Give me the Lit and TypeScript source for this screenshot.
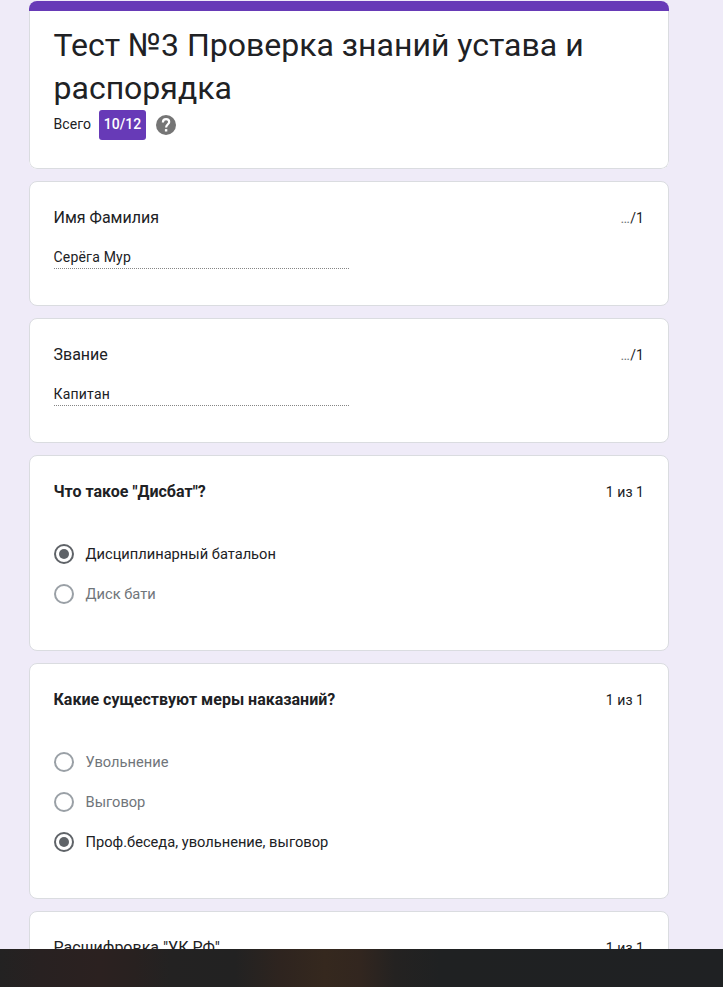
import { LitElement, html, css, nothing } from "lit";
import { customElement, property } from "lit/decorators.js";
import { classMap } from "lit/directives/class-map.js";

interface Question {
  title: string;
  score: string;
  pending?: boolean;
  bold?: boolean;
  answer?: string;
  options?: string[];
  selected?: number;
}

const QUESTIONS: Question[] = [
  { title: "Имя Фамилия", score: "/1", pending: true, answer: "Серёга Мур" },
  { title: "Звание", score: "/1", pending: true, answer: "Капитан" },
  {
    title: 'Что такое "Дисбат"?',
    score: "1 из 1",
    bold: true,
    options: ["Дисциплинарный батальон", "Диск бати"],
    selected: 0,
  },
  {
    title: "Какие существуют меры наказаний?",
    score: "1 из 1",
    bold: true,
    options: ["Увольнение", "Выговор", "Проф.беседа, увольнение, выговор"],
    selected: 2,
  },
  { title: 'Расшифровка "УК РФ"', score: "1 из 1", answer: "" },
];

@customElement("quiz-header")
export class QuizHeader extends LitElement {
  static styles = css`
    :host {
      display: block;
      box-sizing: border-box;
      height: 168px;
      flex: none;
      background: #fff;
      border-radius: 8px;
      overflow: hidden;
    }
    .stripe {
      height: 10px;
      background: #673ab7;
    }
    .body {
      box-sizing: border-box;
      height: 158px;
      padding: 13px 24px 0 23.5px;
      border: 1px solid #dadce0;
      border-top: 0;
      border-radius: 0 0 8px 8px;
    }
    .title {
      margin: 0;
      font-size: 32px;
      font-weight: 400;
      line-height: 43px;
      color: #202124;
    }
    .total {
      display: flex;
      align-items: center;
      height: 30px;
      font-size: 14px;
      line-height: 20px;
    }
    .badge {
      box-sizing: border-box;
      height: 30px;
      width: 47px;
      margin: 0 10px 0 8px;
      padding-top: 4px;
      text-align: center;
      border-radius: 3px;
      background: #673ab7;
      color: #fff;
      font-weight: 500;
    }
    .label {
      width: 37.5px;
      padding-bottom: 2px;
      letter-spacing: 0.1px;
    }
    .help {
      display: block;
      width: 20px;
      height: 20px;
    }
  `;

  render() {
    return html`
      <div class="stripe"></div>
      <div class="body">
        <h1 class="title">Тест №3 Проверка знаний устава и распорядка</h1>
        <div class="total">
          <span class="label">Всего</span>
          <span class="badge">10/12</span>
          <svg class="help" viewBox="0 0 20 20">
            <circle cx="10" cy="10" r="10" fill="#757575" />
            <path
              d="M6.9 7.4C6.9 5.3 8.2 4.1 10.1 4.1S13.2 5.2 13.2 7C13.2 9.2 10.1 9.4 10.1 12.5"
              fill="none"
              stroke="#fff"
              stroke-width="2.2"
            />
            <rect x="8.9" y="14.1" width="2.4" height="2.4" fill="#fff" />
          </svg>
        </div>
      </div>
    `;
  }
}

@customElement("quiz-card")
export class QuizCard extends LitElement {
  @property({ attribute: false }) question!: Question;

  static styles = css`
    :host {
      display: block;
      box-sizing: border-box;
      flex: none;
      padding: 24px 24px 36px 23.5px;
      background: #fff;
      border: 1px solid #dadce0;
      border-radius: 8px;
    }
    .head {
      display: flex;
      justify-content: space-between;
      align-items: flex-start;
      height: 24px;
    }
    .title {
      font-size: 16px;
      line-height: 24px;
    }
    .title.bold {
      font-weight: 700;
    }
    .score {
      padding-top: 2px;
      font-size: 14px;
      line-height: 20px;
      letter-spacing: 0.05px;
    }
    .dots {
      color: #70757a;
      letter-spacing: 0.3px;
    }
    .answer {
      box-sizing: border-box;
      width: 295.5px;
      height: 24px;
      margin-top: 15px;
      border-bottom: 1px dotted rgba(0, 0, 0, 0.48);
      font-size: 14px;
      line-height: 24px;
      letter-spacing: 0.2px;
    }
    .options {
      display: flex;
      flex-direction: column;
      gap: 20px;
      padding: 40px 0 0 0.5px;
      margin-bottom: -1px;
    }
    .option {
      display: flex;
      align-items: center;
      gap: 11.5px;
      height: 20px;
      font-size: 14.667px;
      line-height: 20px;
      color: #70757a;
    }
    .option.on {
      color: #202124;
    }
    .radio {
      display: flex;
      align-items: center;
      justify-content: center;
      box-sizing: border-box;
      width: 20px;
      height: 20px;
      border: 2px solid #9aa0a6;
      border-radius: 50%;
    }
    .on .radio {
      border-color: #5f6368;
    }
    .on .radio::after {
      content: "";
      width: 10px;
      height: 10px;
      border-radius: 50%;
      background: #5f6368;
    }
  `;

  render() {
    const q = this.question;
    return html`
      <div class="head">
        <div class=${classMap({ title: true, bold: !!q.bold })}>${q.title}</div>
        <div class="score">${q.pending ? html`<span class="dots">…</span>` : nothing}${q.score}</div>
      </div>
      ${q.options
        ? html`<div class="options">
            ${q.options.map(
              (text, i) => html`<div class=${classMap({ option: true, on: i === q.selected })}>
                <span class="radio"></span><span>${text}</span>
              </div>`
            )}
          </div>`
        : html`<div class="answer">${q.answer}</div>`}
    `;
  }
}

@customElement("app-root")
export class AppRoot extends LitElement {
  static styles = css`
    :host {
      display: flex;
      flex-direction: column;
      height: 987px;
      overflow: hidden;
      background: #efebf8;
      color: #202124;
      font-family: Roboto, "Liberation Sans", sans-serif;
    }
    .page {
      display: flex;
      flex-direction: column;
      gap: 12px;
      box-sizing: border-box;
      width: 669px;
      height: 949px;
      flex: none;
      padding: 1px 0 0 29px;
      overflow: hidden;
    }
    .choice {
      padding-bottom: 47px;
    }
    .backdrop {
      flex: 1;
      background: linear-gradient(
        90deg,
        #232222 0,
        #282121 40px,
        #2b2120 100px,
        #282120 135px,
        #232222 170px,
        #222222 235px,
        #2e241f 280px,
        #35281e 325px,
        #32261f 360px,
        #242221 395px,
        #1f2122 440px,
        #1f2123 100%
      );
    }
  `;

  render() {
    return html`
      <div class="page">
        <quiz-header></quiz-header>
        ${QUESTIONS.map(
          (q) => html`<quiz-card class=${classMap({ choice: !!q.options })} .question=${q}></quiz-card>`
        )}
      </div>
      <div class="backdrop"></div>
    `;
  }
}
